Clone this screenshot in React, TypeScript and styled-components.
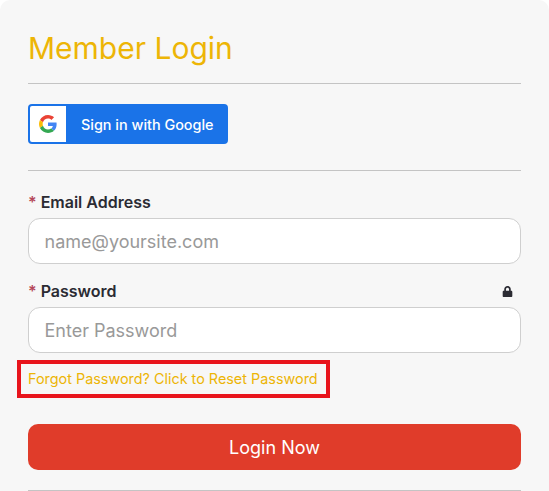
import React from 'react'
import styled, { createGlobalStyle } from 'styled-components'
import { FaLock } from 'react-icons/fa'

const GlobalStyle = createGlobalStyle`
html, body {
  margin: 0;
  padding: 0;
  background: #fff;
  overflow: hidden;
}
* {
  box-sizing: border-box;
}
`
const Card = styled.div`
width: 549px;
height: 491px;
overflow: hidden;
background: #f7f7f7;
border-radius: 10px 10px 0 0;
padding: 0 28px;
font-family: Inter, "Liberation Sans", sans-serif;
`
const Title = styled.h1`
margin: 0;
padding-top: 28px;
height: 83px;
font-size: 30px;
line-height: 40px;
font-weight: 400;
color: #edb506;
`
const Divider = styled.hr`
margin: 0;
border: 0;
height: 1px;
background: #c4c4c4;
`
const GoogleButton = styled.button`
display: flex;
align-items: center;
width: 200px;
height: 40px;
margin: 20px 0 26px;
padding: 2px;
border: 0;
border-radius: 4px;
background: #1a73e8;
color: #fff;
font-family: inherit;
font-size: 14.4px;
font-weight: 500;
`
const GoogleMark = styled.span`
display: flex;
align-items: center;
justify-content: center;
width: 36px;
height: 36px;
background: #fff;
border-radius: 2px 0 0 2px;
`
const GoogleLabel = styled.span`
margin-left: 15px;
`
const Field = styled.div`
margin-top: ${(p: { $top: number }) => p.$top}px;
`
const LabelRow = styled.div`
display: flex;
align-items: center;
justify-content: space-between;
height: 20px;
margin-bottom: 6px;
padding-right: 8px;
`
const Label = styled.label`
font-size: 16px;
font-weight: 600;
color: #2b2b33;
`
const Star = styled.span`
color: #b5475a;
margin-right: 4px;
`
const Input = styled.input`
display: block;
width: 100%;
height: 46px;
padding: 0 15.5px;
background: #fff;
border: 1px solid #cfcfcf;
border-radius: 12px;
font-family: inherit;
font-size: 18px;
color: #2b2b33;
&::placeholder {
  color: #999;
  opacity: 1;
}
`
const LockIcon = styled(FaLock)`
width: 11px;
height: 11px;
color: #2b2b33;
`
const ForgotRow = styled.div`
position: relative;
height: 17px;
margin-top: 17px;
`
const ForgotLink = styled.a`
display: block;
font-size: 14.4px;
line-height: 17px;
color: #edb506;
white-space: nowrap;
`
const Highlight = styled.span`
position: absolute;
left: -11px;
top: -10px;
width: 313px;
height: 38px;
border: 4px solid #e8141c;
`
const LoginButton = styled.button`
display: block;
width: 100%;
height: 46px;
margin: 37px 0 20px;
border: 0;
border-radius: 10px;
background: #e03c2a;
color: #fff;
font-family: inherit;
font-size: 18px;
font-weight: 400;
`

const GoogleLogo = () => (
  <svg width="18" height="18" viewBox="0 0 48 48">
    <path fill="#EA4335" d="M24 9.5c3.54 0 6.71 1.22 9.21 3.6l6.85-6.85C35.9 2.38 30.47 0 24 0 14.62 0 6.51 5.38 2.56 13.22l7.98 6.19C12.43 13.72 17.74 9.5 24 9.5z" />
    <path fill="#4285F4" d="M46.98 24.55c0-1.57-.15-3.09-.38-4.55H24v9.02h12.94c-.58 2.96-2.26 5.48-4.78 7.18l7.73 6c4.51-4.18 7.09-10.36 7.09-17.65z" />
    <path fill="#FBBC05" d="M10.53 28.59c-.48-1.45-.76-2.99-.76-4.59s.27-3.14.76-4.59l-7.98-6.19C.92 16.46 0 20.12 0 24c0 3.88.92 7.54 2.56 10.78l7.97-6.19z" />
    <path fill="#34A853" d="M24 48c6.48 0 11.93-2.13 15.89-5.81l-7.73-6c-2.15 1.45-4.92 2.3-8.16 2.3-6.26 0-11.57-4.22-13.47-9.91l-7.98 6.19C6.51 42.62 14.62 48 24 48z" />
  </svg>
)

const App = () => {
  return (
    <>
      <GlobalStyle />
      <Card>
        <Title>Member Login</Title>
        <Divider />
        <GoogleButton type="button">
          <GoogleMark>
            <GoogleLogo />
          </GoogleMark>
          <GoogleLabel>Sign in with Google</GoogleLabel>
        </GoogleButton>
        <Divider />
        <Field $top={21}>
          <LabelRow>
            <Label><Star>*</Star>Email Address</Label>
          </LabelRow>
          <Input type="email" placeholder="name@yoursite.com" />
        </Field>
        <Field $top={17}>
          <LabelRow>
            <Label><Star>*</Star>Password</Label>
            <LockIcon />
          </LabelRow>
          <Input type="password" placeholder="Enter Password" />
        </Field>
        <ForgotRow>
          <ForgotLink>Forgot Password? Click to Reset Password</ForgotLink>
          <Highlight />
        </ForgotRow>
        <LoginButton type="button">Login Now</LoginButton>
        <Divider />
      </Card>
    </>
  )
}

export default App
